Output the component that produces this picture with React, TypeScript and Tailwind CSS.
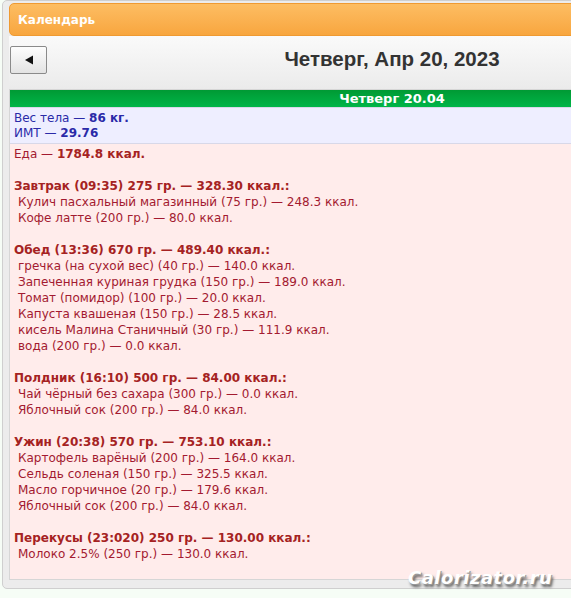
type Item = { name: string; kcal: string }
type Meal = { title: string; items: Item[] }

const meals: Meal[] = [
  {
    title: 'Завтрак (09:35) 275 гр. — 328.30 ккал.:',
    items: [
      { name: 'Кулич пасхальный магазинный (75 гр.)', kcal: '248.3' },
      { name: 'Кофе латте (200 гр.)', kcal: '80.0' },
    ],
  },
  {
    title: 'Обед (13:36) 670 гр. — 489.40 ккал.:',
    items: [
      { name: 'гречка (на сухой вес) (40 гр.)', kcal: '140.0' },
      { name: 'Запеченная куриная грудка (150 гр.)', kcal: '189.0' },
      { name: 'Томат (помидор) (100 гр.)', kcal: '20.0' },
      { name: 'Капуста квашеная (150 гр.)', kcal: '28.5' },
      { name: 'кисель Малина Станичный (30 гр.)', kcal: '111.9' },
      { name: 'вода (200 гр.)', kcal: '0.0' },
    ],
  },
  {
    title: 'Полдник (16:10) 500 гр. — 84.00 ккал.:',
    items: [
      { name: 'Чай чёрный без сахара (300 гр.)', kcal: '0.0' },
      { name: 'Яблочный сок (200 гр.)', kcal: '84.0' },
    ],
  },
  {
    title: 'Ужин (20:38) 570 гр. — 753.10 ккал.:',
    items: [
      { name: 'Картофель варёный (200 гр.)', kcal: '164.0' },
      { name: 'Сельдь соленая (150 гр.)', kcal: '325.5' },
      { name: 'Масло горчичное (20 гр.)', kcal: '179.6' },
      { name: 'Яблочный сок (200 гр.)', kcal: '84.0' },
    ],
  },
  {
    title: 'Перекусы (23:020) 250 гр. — 130.00 ккал.:',
    items: [{ name: 'Молоко 2.5% (250 гр.)', kcal: '130.0' }],
  },
]

export default function App() {
  return (
    <div className="relative h-[598px] w-[571px] overflow-hidden bg-[#f6fdf6] font-['DejaVu_Sans',Verdana,sans-serif]">
      <div className="ml-[2px] w-[780px] rounded-[5px] border border-[#cfcfcf] bg-[#ececec] px-[6px] pt-[2px] pb-[8px]">
        {/* header */}
        <div className="flex h-[33px] items-center rounded-[5px] border border-[#ef9a32] bg-gradient-to-b from-[#fdbd62] to-[#f8a63e] pl-[8px] text-[12px] font-bold text-white">
          Календарь
        </div>

        {/* navigation */}
        <div className="relative flex h-[53px] items-center justify-center bg-gradient-to-b from-[#fafafa] to-[#ebebeb] pb-[6px]">
          <button className="absolute left-[1px] top-[10px] flex h-[28px] w-[37px] items-center justify-center rounded-[2px] border border-[#8a8a8a] bg-gradient-to-b from-[#fdfdfd] to-[#e3e3e3]">
            <svg width="10" height="10" viewBox="0 0 10 10">
              <path d="M1 5 L9 0.5 L9 9.5 Z" fill="#111" />
            </svg>
          </button>
          <h1 className="font-['Liberation_Sans',Arial,sans-serif] text-[20.5px] font-bold text-[#333]">
            Четверг, Апр 20, 2023
          </h1>
        </div>

        {/* day */}
        <div className="border border-[#d6d6d6]">
          <div className="flex h-[17px] items-center justify-center bg-gradient-to-b from-[#009a34] to-[#00b548] text-[13px] font-bold text-white">
            Четверг 20.04
          </div>
          <div className="border-y border-[#d8d8e8] bg-[#eeeeff] px-[4px] pt-[3px] pb-[2px] text-[12px] leading-[15px] text-[#2a2aa8]">
            <div>
              Вес тела — <b>86 кг.</b>
            </div>
            <div>
              ИМТ — <b>29.76</b>
            </div>
          </div>
          <div className="h-[435px] bg-[#ffeceb] px-[4px] pt-[2px] text-[12px] leading-[16px] text-[#a31a30]">
            <div>
              Еда — <b className="text-[#a52222]">1784.8 ккал.</b>
            </div>
            {meals.map((meal) => (
              <div key={meal.title} className="mt-[16px]">
                <div className="font-bold text-[#a52222]">{meal.title}</div>
                {meal.items.map((it, i) => (
                  <div key={i} className="pl-[4px]">
                    {it.name} — {it.kcal} ккал.
                  </div>
                ))}
              </div>
            ))}
          </div>
        </div>
      </div>

      <div className="absolute left-[408px] top-[564px] font-['DejaVu_Sans',sans-serif] text-[18px] font-bold italic tracking-[0.5px] text-white [text-shadow:1px_1px_0_#999,2px_3px_3px_#555]">
        Calorizator.ru
      </div>
    </div>
  )
}
